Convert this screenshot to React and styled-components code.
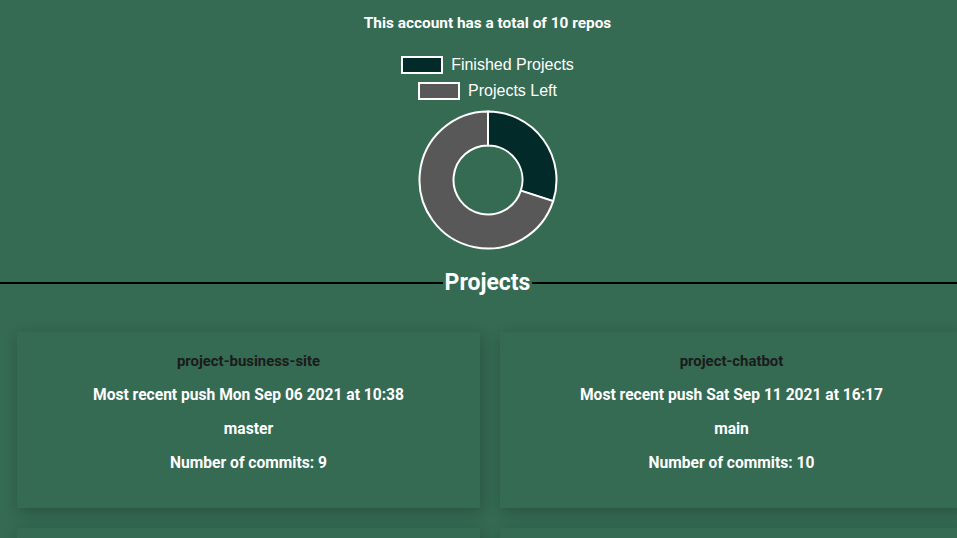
import React from "react";
import styled, { createGlobalStyle } from "styled-components";

const repos = [
  {
    name: "project-business-site",
    pushed: "Mon Sep 06 2021 at 10:38",
    branch: "master",
    commits: 9,
  },
  {
    name: "project-chatbot",
    pushed: "Sat Sep 11 2021 at 16:17",
    branch: "main",
    commits: 10,
  },
  {
    name: "project-guess-who",
    pushed: "Sun Sep 26 2021 at 19:02",
    branch: "main",
    commits: 14,
  },
  {
    name: "project-weather-app",
    pushed: "Sun Oct 03 2021 at 12:44",
    branch: "main",
    commits: 21,
  },
];

const finished = 3;
const total = 10;

const polar = (cx, cy, r, deg) => {
  const a = ((deg - 90) * Math.PI) / 180;
  return [cx + r * Math.cos(a), cy + r * Math.sin(a)];
};

const slice = (cx, cy, r1, r2, from, to) => {
  const large = to - from > 180 ? 1 : 0;
  const [ax, ay] = polar(cx, cy, r2, from);
  const [bx, by] = polar(cx, cy, r2, to);
  const [cx2, cy2] = polar(cx, cy, r1, to);
  const [dx, dy] = polar(cx, cy, r1, from);
  return `M${ax} ${ay} A${r2} ${r2} 0 ${large} 1 ${bx} ${by} L${cx2} ${cy2} A${r1} ${r1} 0 ${large} 0 ${dx} ${dy} Z`;
};

function App() {
  const split = (finished / total) * 360;
  return (
    <>
      <GlobalStyle />
      <Page>
        <Summary>This account has a total of {total} repos</Summary>
        <Legend>
          <LegendItem>
            <Swatch color="#012a29" />
            Finished Projects
          </LegendItem>
          <LegendItem>
            <Swatch color="#585858" />
            Projects Left
          </LegendItem>
        </Legend>
        <Chart width="140" height="140" viewBox="0 0 140 140">
          <path
            d={slice(70, 70, 34.5, 68.5, 0, split)}
            fill="#012a29"
            stroke="#fff"
            strokeWidth="2"
          />
          <path
            d={slice(70, 70, 34.5, 68.5, split, 360)}
            fill="#585858"
            stroke="#fff"
            strokeWidth="2"
          />
        </Chart>
        <Divider>
          <Heading>Projects</Heading>
        </Divider>
        <Grid>
          {repos.map((repo) => (
            <Card key={repo.name}>
              <RepoName>{repo.name}</RepoName>
              <Info>Most recent push {repo.pushed}</Info>
              <Info>{repo.branch}</Info>
              <Info>Number of commits: {repo.commits}</Info>
            </Card>
          ))}
        </Grid>
      </Page>
    </>
  );
}

const GlobalStyle = createGlobalStyle`
  body {
    margin: 0;
    background-color: #356a53;
    overflow: hidden;
    font-family: Roboto, "Liberation Sans", Arial, sans-serif;
  }
`;

const Page = styled.main`
  display: flex;
  flex-direction: column;
  align-items: center;
  width: 975px;
`;

const Summary = styled.h2`
  margin: 14px 0 0;
  font-size: 15.4px;
  line-height: 19px;
  font-weight: 700;
  color: #fff;
`;

const Legend = styled.div`
  display: flex;
  flex-direction: column;
  align-items: center;
  gap: 8px;
  margin-top: 23px;
`;

const LegendItem = styled.div`
  display: flex;
  align-items: center;
  gap: 8px;
  height: 18px;
  font-family: "Liberation Sans", Arial, sans-serif;
  font-size: 16px;
  color: #fff;
`;

const Swatch = styled.span`
  box-sizing: border-box;
  width: 42px;
  height: 18px;
  border: 2px solid #fff;
  background-color: ${(p) => p.color};
`;

const Chart = styled.svg`
  display: block;
  margin-top: 10px;
`;

const Divider = styled.div`
  display: flex;
  align-items: center;
  width: 100%;
  margin-top: 19px;
  gap: 2px;

  &::before,
  &::after {
    content: "";
    flex: 1;
    height: 2px;
    background-color: #000;
  }
`;

const Heading = styled.h1`
  margin: 0;
  font-size: 23px;
  line-height: 28px;
  font-weight: 700;
  color: #fff;
`;

const Grid = styled.section`
  display: grid;
  grid-template-columns: 463px 463px;
  gap: 20px;
  align-self: flex-start;
  padding: 35px 17px 20px;
`;

const Card = styled.article`
  display: flex;
  flex-direction: column;
  align-items: center;
  gap: 15px;
  height: 176px;
  box-sizing: border-box;
  padding: 20px 10px;
  background-color: #356a53;
  box-shadow: 2px 4px 14px rgba(0, 0, 0, 0.22);
  text-align: center;
`;

const RepoName = styled.h3`
  margin: 0;
  font-size: 14.9px;
  line-height: 19px;
  font-weight: 700;
  color: #1b1b1b;
`;

const Info = styled.p`
  margin: 0;
  font-size: 15.6px;
  line-height: 19px;
  font-weight: 700;
  color: #fff;
`;

export default App;
